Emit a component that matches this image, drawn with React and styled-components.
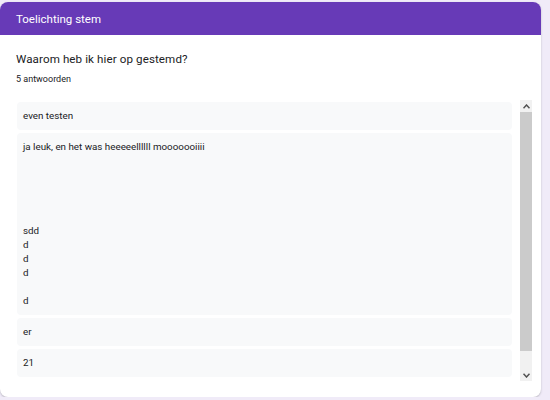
import styled, { createGlobalStyle } from 'styled-components'

const GlobalStyle = createGlobalStyle`
  body {
    margin: 0;
    background: #f0ebf8;
    font-family: Roboto, "Liberation Sans", Arial, sans-serif;
    color: #202124;
  }
`

const Page = styled.div`
  padding-top: 2px;
  width: 541px;
`

const Card = styled.section`
  background: #fff;
  border-radius: 8px;
  height: 395px;
  box-shadow: 0 1px 2px rgba(60, 64, 67, 0.3);
  overflow: hidden;
  display: flex;
  flex-direction: column;
`

const Header = styled.div`
  background: #673ab7;
  color: #fff;
  height: 33px;
  display: flex;
  align-items: center;
  padding-left: 16px;
  font-size: 11.5px;
`

const Body = styled.div`
  padding: 15px 9px 0 16px;
`

const Question = styled.h2`
  margin: 0;
  font-size: 11.6px;
  font-weight: 400;
  line-height: 18px;
  letter-spacing: 0.1px;
`

const Count = styled.div`
  font-size: 9px;
  line-height: 12px;
  margin-top: 5px;
`

const ListArea = styled.div`
  display: flex;
  gap: 8px;
  margin-top: 15px;
  height: 281px;
`

const List = styled.div`
  flex: 1;
  overflow: hidden;
  padding-top: 2px;
  display: flex;
  flex-direction: column;
  gap: 3px;
  margin-left: 1px;
`

const Answer = styled.div`
  background: #f8f9fa;
  border-radius: 4px;
  padding: 7px 6px;
  font-size: 9.8px;
  line-height: 14px;
  white-space: pre-wrap;
  flex-shrink: 0;
`

const Scrollbar = styled.div`
  width: 12px;
  height: 281px;
  background: #f1f1f1;
  display: flex;
  flex-direction: column;
`

const Arrow = styled.div`
  flex: 0 0 12px;
  display: flex;
  align-items: center;
  justify-content: center;
`

const Track = styled.div`
  flex: 1 1 auto;
  background: #f1f1f1;
`

const Thumb = styled.div`
  height: ${(p) => p.$size}px;
  background: #cbcbcb;
`

const answers = [
  'even testen',
  'ja leuk, en het was heeeeellllll mooooooiiii\n\n\n\n\n\nsdd\nd\nd\nd\n\nd',
  'er',
  '21',
]

function Chevron({ up }) {
  return (
    <svg width="7" height="5" viewBox="0 0 7 5">
      <path
        d={up ? 'M0.5 4.2 L3.5 1 L6.5 4.2' : 'M0.5 0.8 L3.5 4 L6.5 0.8'}
        fill="none"
        stroke="#505050"
        strokeWidth="1.5"
      />
    </svg>
  )
}

function App() {
  return (
    <Page>
      <GlobalStyle />
      <Card>
        <Header>Toelichting stem</Header>
        <Body>
          <Question>Waarom heb ik hier op gestemd?</Question>
          <Count>5 antwoorden</Count>
          <ListArea>
            <List>
              {answers.map((a, i) => (
                <Answer key={i}>{a}</Answer>
              ))}
            </List>
            <Scrollbar>
              <Arrow>
                <Chevron up />
              </Arrow>
              <Track>
                <Thumb $size={239} />
              </Track>
              <Arrow>
                <Chevron />
              </Arrow>
            </Scrollbar>
          </ListArea>
        </Body>
      </Card>
    </Page>
  )
}

export default App
